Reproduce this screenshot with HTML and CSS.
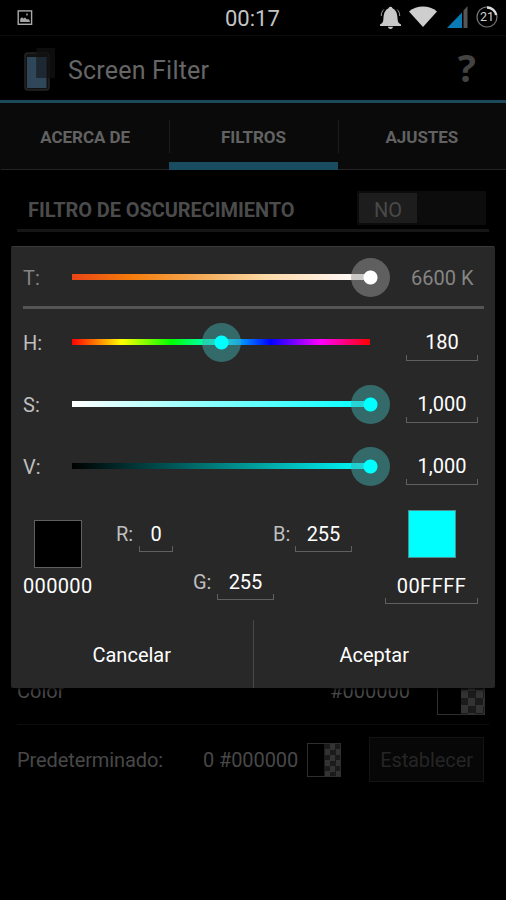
FILE: index.html
```html
<!DOCTYPE html>
<html lang="es">
<head>
<meta charset="utf-8">
<title>Screen Filter</title>
<link rel="stylesheet" href="styles.css">
</head>
<body>
<div class="screen">
  <header class="status">
    <svg class="shot" width="16" height="16" viewBox="0 0 16 16"><rect x="1.200" y=".9" width="13.400" height="13.400" fill="none" stroke="#aaa" stroke-width="1.400"/><path d="M3.200 12V8.800L5 7.200 6.500 8.500l1.500-1 2 2 1.300-.5 1.500 1.800V12z" fill="#a5a5a5"/><rect x="9" y="3.500" width="2" height="2" fill="#777"/></svg>
    <span class="clock">00:17</span>
    <div class="tray">
      <svg width="23" height="24" viewBox="0 0 23 24" fill="#c8c8c8"><path d="M1 21v-1.500c2.500-1.200 3.200-2.500 3.400-5.500C4.700 8 6 5 9.500 3.200a2.100 2.100 0 0 1 4 0C17 5 18.300 8 18.600 14c.2 3 .9 4.300 3.400 5.500V21zM9 21.800h5c-.3 1.600-1.200 2.200-2.500 2.200S9.300 23.400 9 21.800z"/><path d="M2.300 11c0-3 .9-5 2.600-6.500M20.700 11c0-3-.9-5-2.600-6.500" fill="none" stroke="#999" stroke-width="1"/></svg>
      <svg class="wifi" width="28" height="21" viewBox="0 0 28 21"><path d="M0 5.500C7.500-1.200 20.500-1.200 28 5.500L14 21z" fill="#cecece"/></svg>
      <svg class="signal" width="21" height="23" viewBox="0 0 21 23"><path d="M0 23 15 7.500V23z" fill="#0b7bb5"/><path d="M16.500 5.500 20.500 1v22h-4z" fill="#555"/></svg>
      <svg class="battery" width="22" height="22" viewBox="0 0 22 22"><circle cx="11" cy="11" r="10" fill="none" stroke="#777" stroke-width="1.200"/><path d="M11 1.500A9.500 9.500 0 0 1 20.200 9" fill="none" stroke="#ddd" stroke-width="2.500"/><text x="11" y="15.200" text-anchor="middle" class="pct">21</text></svg>
    </div>
  </header>
  <div class="actionbar">
    <svg class="logo" width="34" height="46" viewBox="0 0 34 46"><rect x="2" y="6" width="24" height="37" rx="3" fill="#121212" stroke="#252525" stroke-width="1.500"/><rect x="4" y="10" width="19.500" height="31" fill="#30475a"/><path d="M13.500 1H32v30H13.500z" fill="#111" fill-opacity=".75"/><path d="M13.500 10H23.500v21H13.500z" fill="#1d2832"/></svg>
    <h1>Screen Filter</h1>
    <span class="help">?</span>
  </div>
  <nav class="tabs">
    <div class="tab"><span>ACERCA DE</span></div>
    <div class="tab active"><span>FILTROS</span></div>
    <div class="tab"><span>AJUSTES</span></div>
  </nav>
  <main>
    <div class="section"><h2>FILTRO DE OSCURECIMIENTO</h2><div class="switch"><span>NO</span></div></div>
    <div class="color-row"><span class="name">Color</span><span class="hash">#000000</span><i class="sample big"></i></div>
    <div class="preset-row"><span class="name preset">Predeterminado:</span><span class="value">0 #000000</span><i class="sample"></i><button class="set">Establecer</button></div>
  </main>
  <section class="dialog">
    <div class="slider temp"><label>T:</label><div class="track t-temp"><i class="thumb white"></i></div><span class="kelvin">6600 K</span></div>
    <hr>
    <div class="slider"><label>H:</label><div class="track t-hue"><i class="thumb mid"></i></div><span class="field">180</span></div>
    <div class="slider"><label>S:</label><div class="track t-sat"><i class="thumb"></i></div><span class="field">1,000</span></div>
    <div class="slider"><label>V:</label><div class="track t-val"><i class="thumb"></i></div><span class="field">1,000</span></div>
    <div class="mix">
      <div class="old"><i class="swatch"></i><span class="code">000000</span></div>
      <div class="rgb">
        <div class="rb"><label>R:</label><span class="field small">0</span><label class="b">B:</label><span class="field">255</span></div>
        <div class="g"><label>G:</label><span class="field">255</span></div>
      </div>
      <div class="new"><i class="swatch cyan"></i><span class="field hex">00FFFF</span></div>
    </div>
    <div class="buttons"><button>Cancelar</button><button>Aceptar</button></div>
  </section>
</div>
</body>
</html>
```
FILE: styles.css
```css
* { box-sizing: border-box; margin: 0; padding: 0; }
body { background: #000; font-family: Roboto, sans-serif; font-size: 20px; line-height: 24px; }
i { display: block; }
button { font: inherit; background: none; border: 0; }
.screen { position: relative; width: 506px; height: 900px; overflow: hidden; background: #000; }

.status { display: flex; height: 36px; padding: 0 8px 0 17px; border-bottom: 1px solid #0b0b0b; }
.shot { margin-top: 10px; }
.clock { width: 56px; margin: 7px 0 0 192px; font-size: 22px; color: #c4c4c4; white-space: nowrap; }
.tray { display: flex; margin-left: auto; }
.tray svg { margin-top: 5px; }
.tray .wifi { margin: 6px 0 0 7px; }
.tray .signal { margin: 5px 0 0 10px; }
.tray .battery { margin: 6px 0 0 8px; }
.pct { font: 12.5px Roboto, sans-serif; fill: #d0d0d0; }

.actionbar { display: flex; align-items: center; height: 67px; padding: 0 30px 0 23px; border-bottom: 3px solid #1d4a5a; }
.logo { margin-top: 4px; }
h1 { margin: 5px 0 0 11px; font-size: 25px; line-height: 30px; font-weight: 400; letter-spacing: .2px; color: #666; }
.help { margin: 0 0 2px auto; font: 700 38px/40px "Open Sans", sans-serif; color: #434343; }

.tabs { display: flex; height: 67px; padding-left: 1px; background: #0a0a0a; }
.tab { display: flex; flex: 1; align-items: center; justify-content: center; position: relative; padding-top: 2px; border-bottom: 1px solid #242424; font-size: 17px; font-weight: 700; letter-spacing: -.05px; color: #626262; }
.tab + .tab::before { content: ""; position: absolute; left: 0; top: 17px; width: 1px; height: 33px; background: #1c1c1c; }
.tab.active { border-bottom: 8px solid #1a4c61; padding-top: 9px; }

main { padding: 0 17px; color: #484848; }
.section { display: flex; align-items: center; height: 62px; padding: 17px 3px 0 11px; border-bottom: 3px solid #161616; }
h2 { margin-top: 4px; font-size: 20px; font-weight: 700; letter-spacing: -.08px; color: #4b4b4b; white-space: nowrap; }
.switch { width: 129px; height: 34px; margin: -1px 0 0 auto; padding: 2px; background: #0c0c0c; }
.switch span { display: block; width: 58px; height: 30px; padding-top: 2px; line-height: 31px; text-align: center; background: #1d1d1d; color: #494949; }
.color-row { display: flex; align-items: center; height: 493px; padding: 425px 4px 0 0; border-bottom: 1px solid #0c0c0c; }
.hash { margin: 0 27px 0 auto; }
.sample { width: 34px; height: 34px; border: 1px solid #2e2e2e; background: linear-gradient(#000, #000) left / 50% 100% no-repeat, repeating-conic-gradient(#1b1b1b 0 25%, #333 0 50%) 0 0 / 11px 11px; }
.sample.big { width: 48px; height: 48px; background-size: 50% 100%, 15px 15px; }
.preset-row { display: flex; align-items: center; height: 69px; }
.preset { width: 186px; letter-spacing: -.1px; }
.value { width: 104px; letter-spacing: -.1px; }
.set { width: 115px; height: 45px; margin-left: 28px; background: #070707; border: 1px solid #141414; color: #252525; letter-spacing: -.1px; }

.dialog { position: absolute; left: 11px; top: 246px; width: 484px; height: 442px; padding: 1px 11px 0 12px; background: #282828; border-top: 1px solid #393939; border-radius: 2px; color: #fff; box-shadow: 0 1px 4px #000; }
.dialog hr { height: 3px; border: 0; background: #555; }
.slider { display: flex; align-items: center; height: 62px; }
.slider.temp { height: 58px; }
.slider label, .kelvin { padding-top: 1px; }
label { color: #bebebe; }
.slider label { width: 49px; }
.slider.temp label, .kelvin { padding-top: 2px; color: #858585; }
.track { width: 298px; height: 6px; position: relative; }
.t-temp { background: linear-gradient(90deg, #ea4515, #f57c0c 20%, #f4ae5d 45%, #fcd9a6 65%, #fff3ec 90%, #fff); }
.t-hue { background: linear-gradient(90deg, #f00, #ff0 16.67%, #0f0 33.33%, #0ff 50%, #00f 66.67%, #f0f 83.33%, #f00); }
.t-sat { background: linear-gradient(90deg, #fff, #0ff); }
.t-val { background: linear-gradient(90deg, #000, #0ff); }
.thumb { position: absolute; left: 278.500px; top: -16.500px; width: 39px; height: 39px; border-radius: 50%; background: radial-gradient(circle, #0ff 6.600px, rgba(64, 171, 171, .5) 7.400px); }
.thumb.mid { left: 130px; }
.thumb.white { background: radial-gradient(circle, #fff 6.600px, rgba(150, 150, 150, .5) 7.400px); }
.kelvin { margin-left: 41px; white-space: nowrap; }
.field { display: flex; justify-content: center; width: 72px; height: 36px; padding-top: 6px; background: linear-gradient(#606060, #606060) left bottom / 1px 6px no-repeat, linear-gradient(#606060, #606060) right bottom / 1px 6px no-repeat, linear-gradient(#606060, #606060) left bottom / 100% 1px no-repeat; }
.slider .field { height: 38px; padding-top: 7px; margin-left: 36px; }
hr + .slider { height: 64px; padding-top: 2px; }

.mix { display: flex; height: 123px; }
.swatch { width: 48px; height: 48px; background: #000; border: 1px solid #606060; }
.swatch.cyan { background: #0ff; border-color: #508c8c; margin-left: 22.500px; }
.old { width: 93px; padding-top: 23px; }
.old .swatch { margin-left: 11px; }
.code { display: block; margin-top: 6px; letter-spacing: .35px; }
.rgb { padding-top: 19px; width: 269px; }
.rb, .g { display: flex; height: 47px; }
.rb label, .g label { padding-top: 6px; width: 23px; }
.rb .b { margin-left: 100px; width: 22px; }
.rb .field { width: 57px; height: 36px; }
.g .field { width: 57px; height: 37px; padding-top: 7px; }
.rb .small { width: 34px; }
.g { padding-left: 77px; }
.g label { width: 24px; padding-top: 7px; }
.new { padding-top: 13px; width: 93px; }
.new .field { width: 93px; margin-top: 10px; letter-spacing: .5px; }
.buttons { display: flex; height: 68px; margin: 0 -11px 0 -12px; }
.buttons button { flex: 1; color: #fff; padding-top: 2px; }
.buttons button + button { border-left: 1px solid #484848; }
```
